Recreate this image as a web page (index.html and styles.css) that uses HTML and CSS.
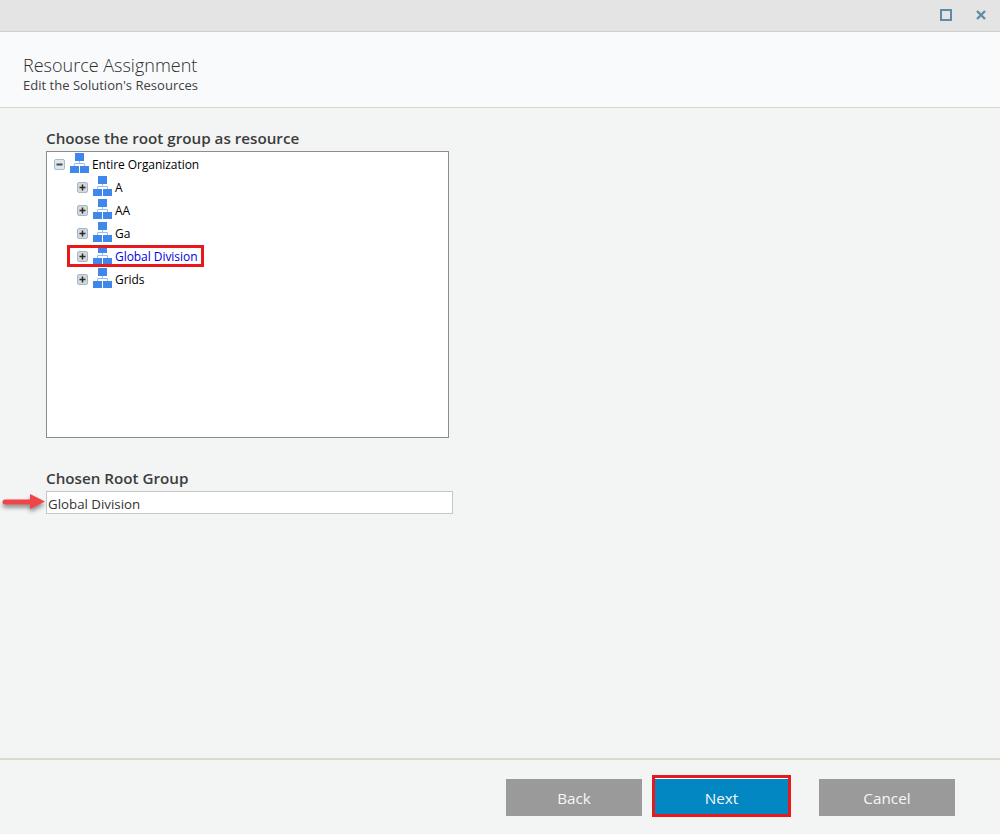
FILE: index.html
```html
<!DOCTYPE html>
<html lang="en">
<head>
<meta charset="utf-8">
<title>Resource Assignment</title>
<link rel="stylesheet" href="styles.css">
</head>
<body>
<svg class="defs" width="0" height="0" aria-hidden="true">
  <symbol id="org" viewBox="0 0 19 20">
    <path d="M9.500 8v2.500M4.500 13v-2.500h10V13" fill="none" stroke="#9cc0ee" stroke-width="1"/>
    <rect x="5" y="0" width="9" height="8" fill="#3f87ea"/>
    <rect x="0" y="13" width="9" height="7" fill="#3f87ea"/>
    <rect x="10" y="13" width="9" height="7" fill="#3f87ea"/>
  </symbol>
  <symbol id="plus" viewBox="0 0 11 11">
    <rect x=".5" y=".5" width="10" height="10" rx="1.500" fill="#d5d8da" stroke="#a3b8cc"/>
    <path d="M2.500 5.500h6M5.500 2.500v6" stroke="#2a2a2a" stroke-width="1.500"/>
  </symbol>
  <symbol id="minus" viewBox="0 0 11 11">
    <rect x=".5" y=".5" width="10" height="10" rx="1.500" fill="#e0e6ec" stroke="#a3bdd2"/>
    <path d="M2.500 5.500h6" stroke="#4a4a4a" stroke-width="2"/>
  </symbol>
</svg>
<div class="window">
  <div class="titlebar">
    <svg class="win-icon win-max" viewBox="0 0 12 12"><rect x="1" y="1" width="10" height="10" fill="none" stroke="#5f8ba8" stroke-width="2"/></svg>
    <svg class="win-icon win-close" viewBox="0 0 10 10"><path d="M1 1l8 8M9 1l-8 8" fill="none" stroke="#5f8ba8" stroke-width="2.400"/></svg>
  </div>
  <header class="header">
    <h1 class="title">Resource Assignment</h1>
    <p class="subtitle">Edit the Solution's Resources</p>
  </header>
  <main class="content">
    <h2 class="label">Choose the root group as resource</h2>
    <div class="tree">
      <div class="row row-root">
        <svg class="toggle"><use href="#minus"/></svg>
        <svg class="org"><use href="#org"/></svg>
        <span>Entire Organization</span>
      </div>
      <div class="row">
        <svg class="toggle"><use href="#plus"/></svg>
        <svg class="org"><use href="#org"/></svg>
        <span>A</span>
      </div>
      <div class="row">
        <svg class="toggle"><use href="#plus"/></svg>
        <svg class="org"><use href="#org"/></svg>
        <span>AA</span>
      </div>
      <div class="row">
        <svg class="toggle"><use href="#plus"/></svg>
        <svg class="org"><use href="#org"/></svg>
        <span>Ga</span>
      </div>
      <div class="row row-selected">
        <svg class="toggle"><use href="#plus"/></svg>
        <svg class="org"><use href="#org"/></svg>
        <span>Global Division</span>
      </div>
      <div class="row">
        <svg class="toggle"><use href="#plus"/></svg>
        <svg class="org"><use href="#org"/></svg>
        <span>Grids</span>
      </div>
    </div>
    <h2 class="label label-chosen">Chosen Root Group</h2>
    <div class="field-wrap">
      <svg class="arrow" viewBox="0 0 44 20">
        <path d="M3 9h26" stroke="#f04446" stroke-width="5" stroke-linecap="round"/>
        <path d="M28 1l15 7.500-15 7.500z" fill="#f04446"/>
      </svg>
      <div class="field">Global Division</div>
    </div>
  </main>
  <footer class="footer">
    <button class="btn" type="button">Back</button>
    <button class="btn btn-primary" type="button">Next</button>
    <button class="btn btn-cancel" type="button">Cancel</button>
  </footer>
</div>
</body>
</html>
```
FILE: styles.css
```css
*, *::before, *::after { box-sizing: border-box; }
html, body { margin: 0; padding: 0; }
body { font-family: "Open Sans", "Noto Sans", sans-serif; color: #3c3c3c; background: #f3f5f4; }
.defs { position: absolute; }
.window { width: 1000px; height: 834px; display: flex; flex-direction: column; }
.titlebar { height: 32px; flex: none; background: #e4e4e4; border-bottom: 1px solid #cfcfcf; display: flex; justify-content: flex-end; align-items: center; gap: 24px; padding: 0 14px 2px 0; }
.win-icon { display: block; }
.win-max { width: 12px; height: 12px; }
.win-close { width: 10px; height: 10px; }
.header { height: 76px; flex: none; background: #f9fafc; border-bottom: 1px solid #d6d8cf; padding: 22px 0 0 23px; }
.title { margin: 0; font-size: 18px; font-weight: 300; line-height: 22px; color: #2e2e2e; }
.subtitle { margin: 0; font-size: 13px; line-height: 18px; color: #404040; letter-spacing: .02px; }
.content { flex: 1; padding: 20px 0 0 46px; }
.label { margin: 0; font-size: 15.2px; font-weight: 600; line-height: 20px; color: #3c3c3c; }
.tree { width: 403px; height: 287px; margin-top: 3px; background: #fff; border: 1px solid #8c8c8c; padding: 1px 0 0 7px; font-size: 12px; letter-spacing: -.05px; color: #000; }
.row { height: 23px; display: flex; align-items: center; padding-left: 23px; position: relative; }
.row-root { padding-left: 0; }
.toggle { width: 11px; height: 11px; flex: none; margin-right: 5px; }
.org { width: 19px; height: 20px; flex: none; margin: 0 3px 3px 0; }
.row-selected { color: #0000e0; }
.row-selected::after { content: ""; position: absolute; left: 13px; top: 0; width: 137px; height: 22px; border: 3px solid #e8191c; }
.label-chosen { margin-top: 30px; }
.field-wrap { position: relative; margin-top: 3px; }
.field { width: 407px; height: 23px; background: #fff; border: 1px solid #c6c6c6; padding-left: 1px; font-size: 13.3px; line-height: 24px; color: #333; }
.arrow { position: absolute; left: -44px; top: 2px; width: 44px; height: 20px; overflow: visible; filter: drop-shadow(0 3px 2px rgba(0, 0, 0, .45)); }
.footer { height: 76px; flex: none; border-top: 2px solid #d9dbc9; display: flex; align-items: flex-start; padding: 19px 0 0 506px; }
.btn { width: 136px; height: 37px; border: 0; padding: 0; background: #9a9a9a; color: #f7f7f7; font-family: inherit; font-size: 15.3px; }
.btn-primary { width: 139px; height: 42px; margin: -4px 0 0 10px; padding-top: 3px; background: #0287c3; border: 3px solid #e8191c; box-shadow: inset 0 1px 0 #fff; }
.btn-cancel { margin-left: 28px; }
```
